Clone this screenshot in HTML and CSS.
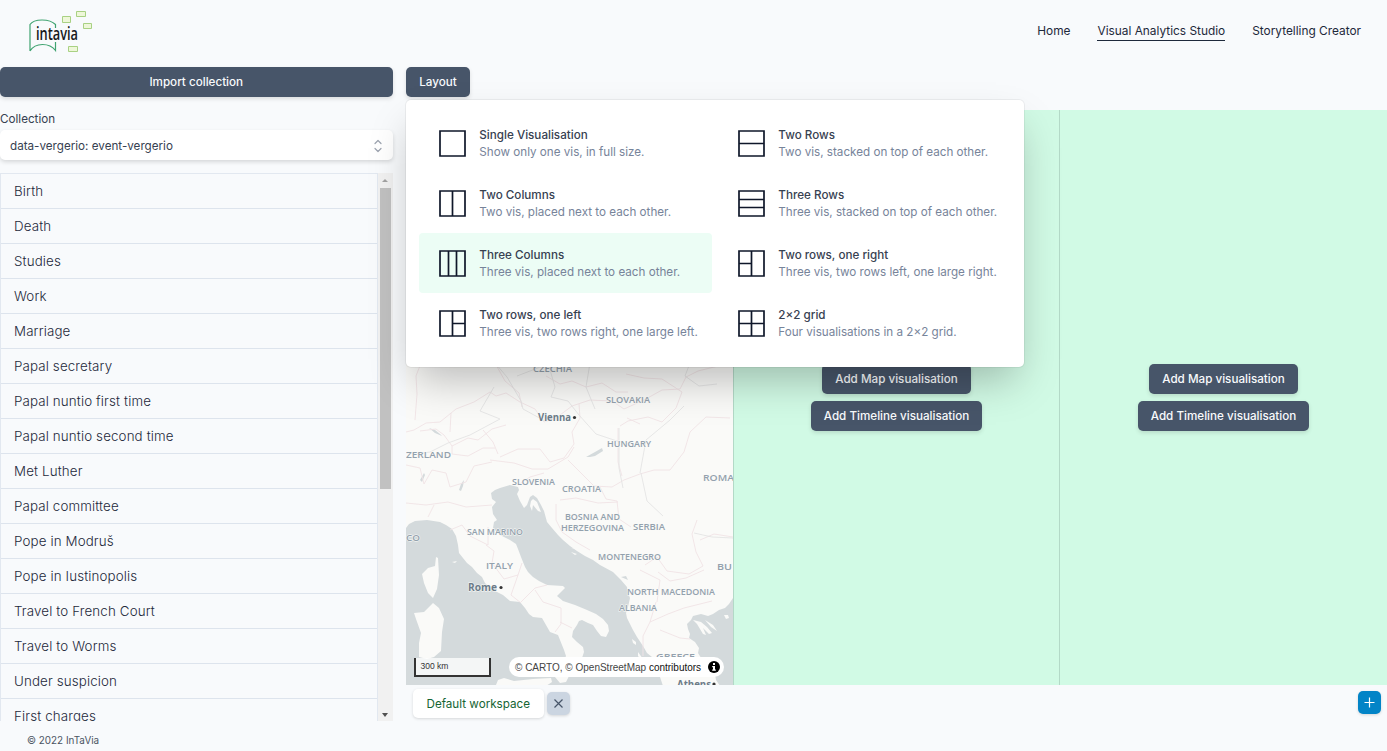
FILE: index.html
```html
<!DOCTYPE html>
<html lang="en">
<head>
<meta charset="utf-8">
<title>InTaVia – Visual Analytics Studio</title>
<link rel="stylesheet" href="styles.css">
</head>
<body>
<div class="app">
  <header class="topbar">
    <svg class="logo" width="68" height="44" viewBox="0 0 68 44" role="img" aria-label="intavia">
      <g fill="none" stroke="#3fa370" stroke-width="1.2">
        <path d="M2 41V14.500Q5 10 14 10T27.500 14.500V18M2 41Q6 34.500 14.500 34.500T27.500 40.500V32"/>
      </g>
      <g fill="#eef7d9" stroke="#a9d183" stroke-width="1">
        <path d="M34.500 6.500h8v6h-8zM48.500 1.500h9v5h-9zM55.500 13.500h8v5h-8zM40.500 36.500h9v5h-9z"/>
      </g>
      <text class="logo-text" x="8" y="30" textLength="42" lengthAdjust="spacingAndGlyphs">intavia</text>
    </svg>
    <nav class="nav">
      <a class="nav-link">Home</a>
      <a class="nav-link active">Visual Analytics Studio</a>
      <a class="nav-link">Storytelling Creator</a>
    </nav>
  </header>

  <div class="body">
    <aside class="side">
      <button class="btn wide">Import collection</button>
      <label class="label">Collection</label>
      <div class="select"><span>data-vergerio: event-vergerio</span>
        <svg width="10" height="14" viewBox="0 0 10 14" fill="none" stroke="#9ca3af" stroke-width="1.200" stroke-linecap="round" stroke-linejoin="round"><path d="M2 4.500L5 1.500l3 3M2 9.500l3 3 3-3"/></svg>
      </div>
      <div class="list-wrap">
        <ul class="list">
          <li>Birth</li><li>Death</li><li>Studies</li><li>Work</li><li>Marriage</li><li>Papal secretary</li><li>Papal nuntio first time</li><li>Papal nuntio second time</li><li>Met Luther</li><li>Papal committee</li><li>Pope in Modruš</li><li>Pope in Iustinopolis</li><li>Travel to French Court</li><li>Travel to Worms</li><li>Under suspicion</li><li>First charges</li>
        </ul>
        <div class="scroll"><i class="up"></i><i class="thumb"></i><i class="down"></i></div>
      </div>
    </aside>

    <main class="main">
      <div class="tools">
        <button class="btn">Layout</button>
        <div class="menu">
          <div class="item"><svg viewBox="0 0 27 27"><path d="M1 1h25v25H1z"/></svg><div><b>Single Visualisation</b><p>Show only one vis, in full size.</p></div></div>
          <div class="item"><svg viewBox="0 0 27 27"><path d="M1 1h25v25H1zM1 13.500h25"/></svg><div><b>Two Rows</b><p>Two vis, stacked on top of each other.</p></div></div>
          <div class="item"><svg viewBox="0 0 27 27"><path d="M1 1h25v25H1zM13.500 1v25"/></svg><div><b>Two Columns</b><p>Two vis, placed next to each other.</p></div></div>
          <div class="item"><svg viewBox="0 0 27 27"><path d="M1 1h25v25H1zM1 9.500h25M1 17.500h25"/></svg><div><b>Three Rows</b><p>Three vis, stacked on top of each other.</p></div></div>
          <div class="item selected"><svg viewBox="0 0 27 27"><path d="M1 1h25v25H1zM9.500 1v25M17.500 1v25"/></svg><div><b>Three Columns</b><p>Three vis, placed next to each other.</p></div></div>
          <div class="item"><svg viewBox="0 0 27 27"><path d="M1 1h25v25H1zM13.500 1v25M1 13.500h12.500"/></svg><div><b>Two rows, one right</b><p>Three vis, two rows left, one large right.</p></div></div>
          <div class="item"><svg viewBox="0 0 27 27"><path d="M1 1h25v25H1zM13.500 1v25M13.500 13.500h12.500"/></svg><div><b>Two rows, one left</b><p>Three vis, two rows right, one large left.</p></div></div>
          <div class="item"><svg viewBox="0 0 27 27"><path d="M1 1h25v25H1zM13.500 1v25M1 13.500h25"/></svg><div><b>2×2 grid</b><p>Four visualisations in a 2×2 grid.</p></div></div>
        </div>
      </div>

      <div class="panes">
        <section class="pane map">
          <svg class="map-svg" viewBox="406 110 327 575">
            <path fill="#fafaf8" d="M406 110h327v575H406z"/>
            <g class="water">
              <path d="M406 528L409 524 415 521 427 520 440 522 446 525 452 529 456 536 458 545 459 553 467 563 472 567 477 573 482 577 485 583 491 589 497 592 503 595 510 601 520 602 525 608 529 614 533 617 542 618 546 625 550 632 558 635 560 640 562 645 564 650 566 656 563 663 557 669 555 677 560 683 566 682 569 676 572 670 577 664 582 658 584 652 583 647 577 642 572 637 573 631 577 625 579 621 582 620 588 623 593 625 597 631 601 636 606 637 609 631 608 625 603 619 596 614 587 610 575 605 563 601 557 596 565 588 563 586 547 585 539 581 533 577 528 572 525 567 521 557 518 549 516 544 510 540 500 535 493 528 494 522 497 520 493 514 492 507 496 502 492 499 491 493 495 490 500 488 510 485 518 487 519 490 517 494 520 501 524 508 527 505 530 497 533 495 537 498 541 505 544 511 547 522 552 528 558 535 563 540 570 546 577 551 585 556 593 560 600 565 613 572 621 580 627 587 628 593 630 598 628 607 626 613 627 618 630 624 633 630 637 637 643 646 647 653 652 657 655 661 658 670 660 677 663 686 406 686z"/>
              <path d="M733 598L729 604 725 608 719 610 713 614 708 616 701 614 693 616 691 620 687 624 688 629 690 634 689 638 695 642 699 648 698 653 703 661 709 668 715 674 716 680 720 686 733 686z"/>
              <path d="M586 457L595 452 602 448 603 451 595 456 590 457zM459 490L461 484 464 480 463 486 461 491zM420 480L424 473 425 475 422 482zM429 428L435 430 440 434 442 436 435 433zM621 577L626 576 628 580zM649 671L658 669 669 671 675 669 682 674 675 676 664 674z"/>
            </g>
            <g fill="#fafaf8">
              <path d="M436 557L438 558 439 575 437 589 433 598 428 593 424 583 422 574 428 568 435 566zM433 603L439 608 444 619 442 632 441 651 434 657 427 659 419 657 419 643 421 633 416 619 414 613 424 612zM496 685L498 680 504 678 514 681 533 679 551 678 552 682 546 686 496 686z"/>
              <path d="M531 501L533 499 537 502 541 512 538 511 533 505 532 511 530 506zM571 548L579 549 578 550zM571 552L577 554 575 555zM632 639L636 642 636 645 633 643zM638 652L643 659 642 661 638 656zM724 615L728 615 729 618 726 619zM452 562L457 561 455 563zM693 620L701 622 707 627 712 633 709 634 703 628 706 635 703 634 697 624zM705 620L713 625 717 631 711 627z"/>
            </g>
            <g fill="none" stroke="#f0e3e5" stroke-width=".9">
              <path d="M406 432l8-2 12-7 14-1 16-13 18-7 16-10 6 4 10-3 14 9 15 7 9 13 12-4 16-12 18-6 22 1 12 8 20-9 18-10 18-1 6-12 12-6 20-5"/>
              <path d="M415 420l2-26-1-18 5-13M450 432l1-19M420 431l16-2 8 6 8 11 16-8 10 2 14-11 14-4M452 446l0 8 16 2 15-8 12 0M500 457l18-8 22 0 10 13 14-4 10-14-2-12 8-14-1-14M483 430l10 12 5 12M495 363l10 18 14 12 3 14"/>
              <path d="M490 460l24 3 18 6 16 0 20-12 6-10M568 460l12 12 14 14 18 1 12-7 16-6 14-4 16 0 14-18 6-20 16-15 24 1M620 426l8-5 20-4 14 5 14-14M618 428l0 34 4 14M600 487l6 12 11 2 2 18 12 8M560 500l16-2 22 5 20-1M556 504l0 16 6 12 14 10 14 8"/>
              <path d="M406 503l20 2 22-3 18 5 26-2M434 505l-6 12M406 465l14 3 4 16 8-14 14 3 4 14 16-5 8-16 18-4M544 473l-14 4-12 8M626 374l18 4 18 1 20 13-6 16M546 376l14 8 12-3 14 6 16-4 14 9 12 0"/>
              <path d="M450 530l12-5 8 11 18 9 0-18M486 545l8 6-2 12 12 16 14-4 4-12M518 575l-7 20 10 8M521 602l14-14 12-3M535 590l8 12 18 6 0 16-6 8M560 622l12 6M697 520l-5 14 4 18 7 14-14 8-22-3-10-14-12 8M658 572l12 9 16-3 18-8M640 570l20 10-3 22M700 540l14-6 19 3M656 602l-6 20-7 14 0 20M650 622l18-8 16-6 28-7M660 630l20 8 10 1M627 418l13 6"/>
            </g>
            <g fill="none" stroke="#e4e4e4" stroke-width=".9">
              <path d="M406 453l10 1 14-2 18-9 22-8 30-16-20-8 14-24M495 363l12 14 14 24 2 8 22 12M517 376l26-10M548 363l7 24-4 10 17 4 11 14 17 19 24 8M590 363l-4 24 9 22M619 428v40l4 20M640 473l6-33 24-20 14-14M641 473l6 28 16 15M690 363l-5 13 14 10 18-2M694 533l18 4 21 1"/>
            </g>
            <g class="country">
              <text x="533" y="372" textLength="39" lengthAdjust="spacingAndGlyphs">CZECHIA</text>
              <text x="606" y="403" textLength="44" lengthAdjust="spacingAndGlyphs">SLOVAKIA</text>
              <text x="607" y="447" textLength="44" lengthAdjust="spacingAndGlyphs">HUNGARY</text>
              <text x="406" y="458" textLength="45" lengthAdjust="spacingAndGlyphs">ZERLAND</text>
              <text x="703" y="480.500" textLength="31" lengthAdjust="spacingAndGlyphs">ROMA</text>
              <text x="512" y="485" textLength="43" lengthAdjust="spacingAndGlyphs">SLOVENIA</text>
              <text x="562" y="492" textLength="39" lengthAdjust="spacingAndGlyphs">CROATIA</text>
              <text x="565" y="520" textLength="55" lengthAdjust="spacingAndGlyphs">BOSNIA AND</text>
              <text x="561" y="530.500" textLength="63" lengthAdjust="spacingAndGlyphs">HERZEGOVINA</text>
              <text x="633" y="529.500" textLength="32" lengthAdjust="spacingAndGlyphs">SERBIA</text>
              <text x="467" y="535" textLength="56" lengthAdjust="spacingAndGlyphs">SAN MARINO</text>
              <text x="406" y="540.500" textLength="14" lengthAdjust="spacingAndGlyphs">CO</text>
              <text x="598" y="560" textLength="63" lengthAdjust="spacingAndGlyphs">MONTENEGRO</text>
              <text x="486" y="569" textLength="27" lengthAdjust="spacingAndGlyphs">ITALY</text>
              <text x="717" y="570" textLength="15" lengthAdjust="spacingAndGlyphs">BU</text>
              <text x="627" y="595" textLength="88" lengthAdjust="spacingAndGlyphs">NORTH MACEDONIA</text>
              <text x="619" y="610.500" textLength="38" lengthAdjust="spacingAndGlyphs">ALBANIA</text>
              <text x="656" y="660" textLength="39" lengthAdjust="spacingAndGlyphs">GREECE</text>
            </g>
            <g class="city">
              <text x="538" y="421" textLength="33" lengthAdjust="spacingAndGlyphs">Vienna</text>
              <text x="468" y="591" textLength="29" lengthAdjust="spacingAndGlyphs">Rome</text>
              <text x="677" y="687.500" textLength="34" lengthAdjust="spacingAndGlyphs">Athens</text>
              <circle cx="574.500" cy="417.500" r="1.600"/><circle cx="501" cy="587.500" r="1.600"/><circle cx="714" cy="684" r="1.600"/>
            </g>
          </svg>
          <div class="scale">300 km</div>
          <div class="attrib"><span>© CARTO, © OpenStreetMap <em>contributors</em></span>
            <svg width="12" height="12" viewBox="0 0 12 12"><circle cx="6" cy="6" r="6"/><path fill="#fff" d="M5 2h2v2H5zM4.200 5H7v3.500h.8v1.200H4.200V8.500H5V6.200h-.8z"/></svg>
          </div>
        </section>
        <section class="pane empty">
          <button class="btn">Add Map visualisation</button>
          <button class="btn">Add Timeline visualisation</button>
        </section>
        <section class="pane empty">
          <button class="btn">Add Map visualisation</button>
          <button class="btn">Add Timeline visualisation</button>
        </section>
      </div>

      <div class="tabs">
        <div class="tab">Default workspace</div>
        <button class="close"><svg width="11" height="11" viewBox="0 0 11 11"><path d="M1.500 1.500l8 8M9.500 1.500l-8 8"/></svg></button>
        <button class="add"><svg width="11" height="11" viewBox="0 0 11 11"><path d="M5.500 .5v10M.5 5.500h10"/></svg></button>
      </div>
    </main>
  </div>
  <footer class="footer">© 2022 InTaVia</footer>
</div>
</body>
</html>
```
FILE: styles.css
```css
* { box-sizing: border-box; }
body {
  margin: 0;
  width: 1387px;
  height: 751px;
  overflow: hidden;
  background: #f8fafc;
  color: #1e293b;
  font-family: Inter, "Liberation Sans", sans-serif;
  font-size: 11.667px;
}
button { font: inherit; border: 0; padding: 0; }
p, ul { margin: 0; padding: 0; }
.app { display: flex; flex-direction: column; height: 751px; }

.topbar { height: 67px; padding: 10px 26px 0 28px; display: flex; justify-content: space-between; }
.logo-text { font: 600 18.500px "Open Sans", sans-serif; fill: #16181b; }
.nav { display: flex; gap: 27px; padding-top: 11px; }
.nav-link { height: 20px; line-height: 20px; font-size: 11.870px; }
.nav-link.active { border-bottom: 1px solid #1e293b; }

.body { display: flex; height: 654px; gap: 13.500px; }
.side { width: 392.500px; display: flex; flex-direction: column; }
.btn {
  height: 30px;
  padding: 0 13.200px 1px;
  border-radius: 5px;
  background: #475569;
  color: #f8fafc;
  font-weight: 550;
  box-shadow: 0 2px 4px rgba(0, 0, 0, .12);
  white-space: nowrap;
}
.wide { width: 100%; }
.label { padding-top: 14px; height: 33px; line-height: 16px; color: #374151; }
.select {
  height: 30px;
  padding: 1px 10px 0;
  display: flex;
  align-items: center;
  justify-content: space-between;
  background: #fff;
  border-radius: 5px;
  color: #374151;
  box-shadow: 0 2px 4px rgba(0, 0, 0, .14);
}
.list-wrap { margin-top: 13px; height: 548px; display: flex; overflow: hidden; }
.list { flex: 1; list-style: none; border: 1px solid #e2e8f0; border-bottom: 0; }
.list li { height: 35px; padding-left: 13px; line-height: 34px; font-size: 13.333px; font-weight: 300; letter-spacing: .14px; color: #1e293b; border-bottom: 1px solid #dde4ed; }
.scroll { width: 14.500px; padding: 5px 2px 4px; background: #f1f1f1; display: flex; flex-direction: column; align-items: center; }
.up, .down { border: 3px solid transparent; }
.up { border-top: 0; border-bottom: 3px solid #a3a3a3; margin-bottom: 6px; margin-top: 1px; }
.down { border-bottom: 0; border-top: 4px solid #505050; margin-top: auto; }
.thumb { width: 11px; height: 301px; background: #c1c1c1; }

.main { flex: 1; display: flex; flex-direction: column; }
.tools { position: relative; height: 43px; }
.menu {
  position: absolute;
  z-index: 2;
  left: 0;
  top: 33px;
  width: 618px;
  height: 267px;
  padding: 13px;
  display: grid;
  grid-template-columns: 293px 293px;
  grid-template-rows: repeat(4, 60px);
  column-gap: 6px;
  background: #fff;
  border-radius: 5px;
  box-shadow: 0 0 0 1px rgba(0, 0, 0, .05), 0 20px 40px -8px rgba(0, 0, 0, .26);
}
.item { display: flex; align-items: center; gap: 13.300px; padding-left: 20px; border-radius: 4px; white-space: nowrap; }
.item svg { width: 27px; height: 27px; fill: none; stroke: #0f172a; stroke-width: 1.700; }
.item div { padding-top: 2px; }
.item b { display: block; font-weight: 500; line-height: 17px; color: #374151; }
.item p { line-height: 17px; color: #77849a; }
.selected { background: #ecfdf5; }

.panes { height: 575px; display: grid; grid-template-columns: 327px 326px 1fr; }
.pane + .pane { border-left: 1px solid #b3d9c7; }
.map { position: relative; overflow: hidden; }
.map-svg { display: block; width: 327px; height: 575px; }
.water { fill: #d4dadc; }
.country { font: 600 9.500px "Open Sans", sans-serif; fill: #93a1ad; stroke: #fafaf8; stroke-width: 1px; paint-order: stroke; }
.city { font: 700 10px "Open Sans", sans-serif; fill: #6c7c89; stroke: #fafaf8; stroke-width: 1px; paint-order: stroke; }
.city circle { fill: #333; stroke: none; }
.scale {
  position: absolute;
  left: 8px;
  bottom: 8px;
  width: 77px;
  height: 19px;
  padding-left: 4.500px;
  border: 2px solid #333;
  border-top: 0;
  background: rgba(255, 255, 255, .75);
  color: #333;
  font: 8.500px/17px "Liberation Sans", sans-serif;
}
.attrib {
  position: absolute;
  right: 9px;
  bottom: 8px;
  width: 215px;
  height: 20px;
  padding: 0 4px 0 6px;
  display: flex;
  align-items: center;
  justify-content: space-between;
  border-radius: 10px;
  background: #fff;
  color: #444;
  font: 10px "Liberation Sans", sans-serif;
  white-space: nowrap;
}
.attrib em { font-style: normal; color: #111; }
.empty { background: #d1fae5; display: flex; flex-direction: column; align-items: center; justify-content: center; gap: 7px; }
.tabs { height: 36px; padding: 4px 6px 0 7px; display: flex; }
.tab { width: 130.500px; height: 29px; background: #fff; border-radius: 5px; line-height: 30px; text-align: center; color: #166534; box-shadow: 0 1px 3px rgba(0, 0, 0, .14); }
.close, .add { width: 23px; height: 23px; border-radius: 5px; display: grid; place-items: center; box-shadow: 0 1px 3px rgba(0, 0, 0, .15); fill: none; }
.close { margin: 3px auto 0 3.500px; background: #cbd5e1; stroke: #475569; stroke-width: 1.200; }
.add { margin-top: 2px; background: #0284c7; stroke: #fff; stroke-width: 1.200; }
.footer { height: 30px; padding: 12px 0 0 27px; font-size: 9.900px; line-height: 14px; color: #4b5563; }
```
